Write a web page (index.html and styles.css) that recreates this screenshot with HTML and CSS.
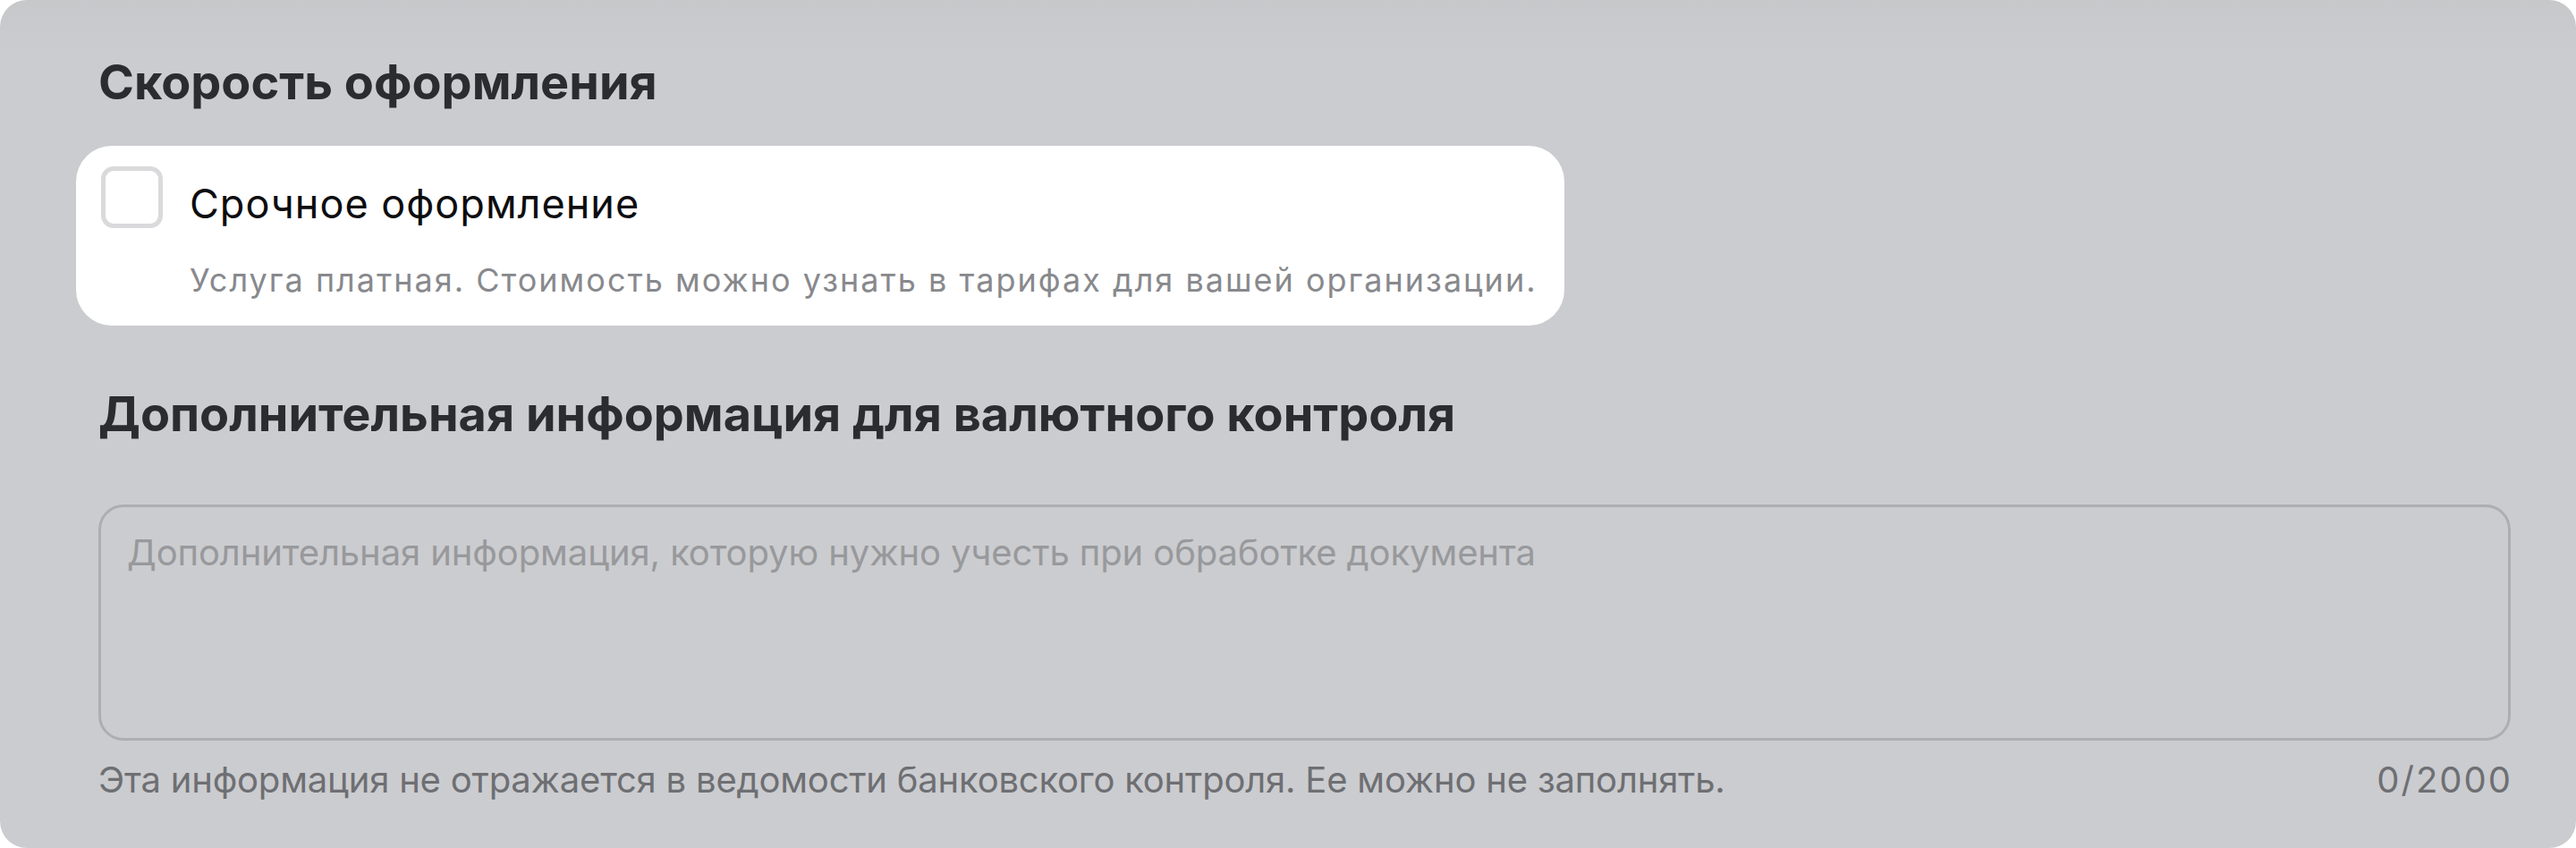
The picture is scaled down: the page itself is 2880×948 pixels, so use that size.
FILE: index.html
```html
<!DOCTYPE html>
<html lang="ru">
<head>
    <meta charset="UTF-8">
    <meta name="viewport" content="width=device-width, initial-scale=1.0">
    <title>Срочное оформление</title>
    <link rel="stylesheet" href="styles.css">
</head>
<body>
    <div class="panel">
        <h2 class="section-title">Скорость оформления</h2>

        <label class="urgent-card" for="urgent">
            <input type="checkbox" id="urgent" name="urgent" class="urgent-check">
            <span class="urgent-box"></span>
            <span class="urgent-text">
                <span class="urgent-label">Срочное оформление</span>
                <span class="urgent-hint">Услуга платная. Стоимость можно узнать в тарифах для вашей организации.</span>
            </span>
        </label>

        <h2 class="section-title section-title-second">Дополнительная информация для валютного контроля</h2>

        <textarea class="info-field" id="info" name="info" maxlength="2000" placeholder="Дополнительная информация, которую нужно учесть при обработке документа"></textarea>

        <div class="info-footer">
            <span class="info-note">Эта информация не отражается в ведомости банковского контроля. Ее можно не заполнять.</span>
            <span class="info-counter">0/2000</span>
        </div>
    </div>
</body>
</html>
```

FILE: styles.css
```css
html, body {
    margin: 0;
    padding: 0;
    background: #ffffff;
}

body {
    font-family: 'Inter', 'Noto Sans', sans-serif;
}

.panel {
    box-sizing: border-box;
    height: 100vh;
    padding: 60px 73px 0 110px;
    border-radius: 30px;
    background: linear-gradient(180deg, #c7c8ca 0px, #cbcccf 60px, #cbcccf 100%);
    display: flex;
    flex-direction: column;
    align-items: flex-start;
}

.section-title {
    margin: 0;
    font-size: 54px;
    line-height: 64px;
    font-weight: 700;
    color: #2b2c30;
    letter-spacing: 0;
}

.urgent-card {
    display: flex;
    align-items: flex-start;
    gap: 30px;
    margin: 39px 0 0 -25px;
    padding: 23px 30px 28px 28px;
    background: #ffffff;
    border-radius: 40px;
    cursor: pointer;
}

.urgent-check {
    display: none;
}

.urgent-box {
    box-sizing: border-box;
    flex: none;
    width: 69px;
    height: 69px;
    border: 5px solid #dadadc;
    border-radius: 14px;
    background: #ffffff;
}

.urgent-text {
    display: flex;
    flex-direction: column;
    gap: 34px;
    padding-top: 14px;
}

.urgent-label {
    font-size: 45px;
    line-height: 56px;
    letter-spacing: 1px;
    color: #0d0d0f;
}

.urgent-hint {
    font-size: 36px;
    line-height: 46px;
    letter-spacing: 2px;
    color: #88898d;
}

.section-title-second {
    margin-top: 67px;
}

.info-field {
    box-sizing: border-box;
    width: 100%;
    height: 264px;
    margin-top: 69px;
    padding: 26px 29px;
    border: 3px solid #adaeb1;
    border-radius: 28px;
    background: transparent;
    font-family: 'Inter', 'Noto Sans', sans-serif;
    font-size: 40px;
    line-height: 50px;
    letter-spacing: -0.1px;
    color: #2b2c30;
    resize: none;
    outline: none;
}

.info-field::placeholder {
    color: #98999c;
}

.info-footer {
    width: 100%;
    display: flex;
    justify-content: space-between;
    margin-top: 20px;
    font-size: 40px;
    line-height: 48px;
    letter-spacing: -0.2px;
    color: #6e6f73;
}

.info-counter {
    letter-spacing: 2px;
    margin-right: -2px;
}
```
